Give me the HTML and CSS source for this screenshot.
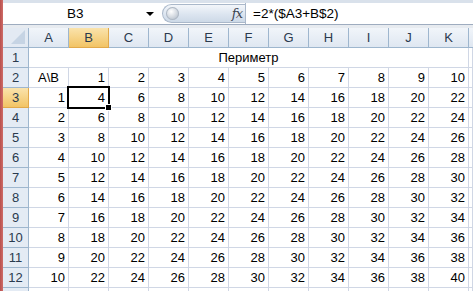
FILE: index.html
```html
<!DOCTYPE html>
<html>
<head>
<meta charset="utf-8">
<link rel="stylesheet" href="styles.css">
</head>
<body>
<div class="app">
  <div class="strip"></div>
  <div class="main">
    <div class="topband"></div>
    <div class="fbar">
      <div class="namebox"><span class="nbtext">B3</span><span class="arrow"></span></div>
      <div class="pill"><span class="knob"></span><span class="fx">fx</span></div>
      <div class="formula">=2*($A3+B$2)</div>
    </div>
    <div class="band"></div>
    <div class="sheet">
      <div class="h corner"><span class="tri"></span></div>
      <div class="h">A</div><div class="h sel">B</div><div class="h">C</div><div class="h">D</div><div class="h">E</div><div class="h">F</div><div class="h">G</div><div class="h">H</div><div class="h">I</div><div class="h">J</div><div class="h">K</div><div class="h last"></div>

      <div class="rh">1</div><div class="c merge">Периметр</div><div class="c"></div>

      <div class="rh">2</div><div class="c ctr">A\B</div><div class="c">1</div><div class="c">2</div><div class="c">3</div><div class="c">4</div><div class="c">5</div><div class="c">6</div><div class="c">7</div><div class="c">8</div><div class="c">9</div><div class="c">10</div><div class="c"></div>

      <div class="rh sel">3</div><div class="c">1</div><div class="c active">4<span class="selbox"><span class="handle"></span></span></div><div class="c">6</div><div class="c">8</div><div class="c">10</div><div class="c">12</div><div class="c">14</div><div class="c">16</div><div class="c">18</div><div class="c">20</div><div class="c">22</div><div class="c"></div>

      <div class="rh">4</div><div class="c">2</div><div class="c">6</div><div class="c">8</div><div class="c">10</div><div class="c">12</div><div class="c">14</div><div class="c">16</div><div class="c">18</div><div class="c">20</div><div class="c">22</div><div class="c">24</div><div class="c"></div>

      <div class="rh">5</div><div class="c">3</div><div class="c">8</div><div class="c">10</div><div class="c">12</div><div class="c">14</div><div class="c">16</div><div class="c">18</div><div class="c">20</div><div class="c">22</div><div class="c">24</div><div class="c">26</div><div class="c"></div>

      <div class="rh">6</div><div class="c">4</div><div class="c">10</div><div class="c">12</div><div class="c">14</div><div class="c">16</div><div class="c">18</div><div class="c">20</div><div class="c">22</div><div class="c">24</div><div class="c">26</div><div class="c">28</div><div class="c"></div>

      <div class="rh">7</div><div class="c">5</div><div class="c">12</div><div class="c">14</div><div class="c">16</div><div class="c">18</div><div class="c">20</div><div class="c">22</div><div class="c">24</div><div class="c">26</div><div class="c">28</div><div class="c">30</div><div class="c"></div>

      <div class="rh">8</div><div class="c">6</div><div class="c">14</div><div class="c">16</div><div class="c">18</div><div class="c">20</div><div class="c">22</div><div class="c">24</div><div class="c">26</div><div class="c">28</div><div class="c">30</div><div class="c">32</div><div class="c"></div>

      <div class="rh">9</div><div class="c">7</div><div class="c">16</div><div class="c">18</div><div class="c">20</div><div class="c">22</div><div class="c">24</div><div class="c">26</div><div class="c">28</div><div class="c">30</div><div class="c">32</div><div class="c">34</div><div class="c"></div>

      <div class="rh">10</div><div class="c">8</div><div class="c">18</div><div class="c">20</div><div class="c">22</div><div class="c">24</div><div class="c">26</div><div class="c">28</div><div class="c">30</div><div class="c">32</div><div class="c">34</div><div class="c">36</div><div class="c"></div>

      <div class="rh">11</div><div class="c">9</div><div class="c">20</div><div class="c">22</div><div class="c">24</div><div class="c">26</div><div class="c">28</div><div class="c">30</div><div class="c">32</div><div class="c">34</div><div class="c">36</div><div class="c">38</div><div class="c"></div>

      <div class="rh">12</div><div class="c">10</div><div class="c">22</div><div class="c">24</div><div class="c">26</div><div class="c">28</div><div class="c">30</div><div class="c">32</div><div class="c">34</div><div class="c">36</div><div class="c">38</div><div class="c">40</div><div class="c"></div>

      <div class="rh"></div><div class="c"></div><div class="c"></div><div class="c"></div><div class="c"></div><div class="c"></div><div class="c"></div><div class="c"></div><div class="c"></div><div class="c"></div><div class="c"></div><div class="c"></div><div class="c"></div>
    </div>
  </div>
</div>
</body>
</html>
```
FILE: styles.css
```css
html, body {
  margin: 0;
  padding: 0;
  background: #ffffff;
}
body {
  width: 473px;
  height: 291px;
  overflow: hidden;
  font-family: "Liberation Sans", Arial, sans-serif;
  font-size: 13px;
  color: #000;
}
.app {
  display: flex;
  width: 473px;
  height: 291px;
  overflow: hidden;
}
.strip {
  width: 3px;
  flex: none;
  background: linear-gradient(90deg, #b8504d, #cf6c68);
}
.main {
  flex: 1;
  min-width: 0;
  display: flex;
  flex-direction: column;
  overflow: hidden;
}
.topband {
  height: 3px;
  flex: none;
  background: #d9e1eb;
}
.fbar {
  height: 21px;
  flex: none;
  display: flex;
  align-items: stretch;
  background: #ffffff;
  border-bottom: 1px solid #9eacbf;
}
.namebox {
  width: 159px;
  flex: none;
  display: flex;
  align-items: center;
  position: relative;
}
.nbtext {
  margin-left: 64px;
  font-size: 13.5px;
}
.arrow {
  margin-left: 62px;
  width: 0;
  height: 0;
  border-left: 4px solid transparent;
  border-right: 4px solid transparent;
  border-top: 4px solid #000;
}
.pill {
  width: 83px;
  flex: none;
  margin: 1px 0 1px 0;
  border-radius: 10px 0 0 10px;
  border: 1px solid #aab8ca;
  border-right: none;
  background: linear-gradient(#f3f6fa, #dce5f0 55%, #cdd9e7);
  display: flex;
  align-items: center;
  justify-content: space-between;
  box-sizing: border-box;
  padding: 0 3px 0 3px;
}
.knob {
  width: 13px;
  height: 13px;
  border-radius: 50%;
  background: radial-gradient(circle at 40% 35%, #ffffff, #c9d0d9 60%, #9aa6b4);
  box-shadow: inset 0 0 0 1px #aeb8c5;
}
.fx {
  font-family: "DejaVu Serif", "Liberation Serif", serif;
  font-style: italic;
  font-size: 13px;
  color: #3b4350;
  letter-spacing: -1px;
}
.formula {
  flex: 1;
  border-left: 1px solid #aab8ca;
  padding-left: 7px;
  display: flex;
  align-items: center;
  font-size: 13.5px;
}
.band {
  height: 3px;
  flex: none;
  background: #e7ebf0;
}
.sheet {
  flex: 1;
  display: grid;
  grid-template-columns: 26px repeat(11, 40px) 1fr;
  grid-auto-rows: 20px;
  overflow: hidden;
}
.h {
  box-sizing: border-box;
  border-right: 1px solid #9eb6ce;
  border-bottom: 1px solid #9eb6ce;
  background: linear-gradient(#f1f5fa, #dfe7f1);
  color: #2a3a4e;
  display: flex;
  align-items: center;
  justify-content: center;
  font-size: 13px;
}
.h.last {
  border-right: none;
}
.h.sel, .rh.sel {
  background: linear-gradient(#fae3ac, #f2c465);
  border-color: #e1a94b;
}
.corner {
  position: relative;
  background: #e3eaf3;
}
.tri {
  position: absolute;
  right: 3px;
  bottom: 3px;
  width: 0;
  height: 0;
  border-left: 14px solid transparent;
  border-bottom: 14px solid #c6d4e4;
}
.rh {
  box-sizing: border-box;
  border-right: 1px solid #9eb6ce;
  border-bottom: 1px solid #9eb6ce;
  background: #e4ebf4;
  color: #2a3a4e;
  display: flex;
  align-items: center;
  justify-content: center;
  font-size: 13px;
}
.c {
  box-sizing: border-box;
  border-right: 1px solid #d0d7e5;
  border-bottom: 1px solid #d0d7e5;
  display: flex;
  align-items: flex-end;
  justify-content: flex-end;
  padding: 0 3px 2px 0;
  line-height: 15px;
}
.c.merge {
  grid-column: span 11;
  justify-content: center;
  padding-right: 0;
}
.c.ctr {
  justify-content: center;
  padding-right: 0;
}
.c.active {
  position: relative;
}
.selbox {
  position: absolute;
  left: -2px;
  top: -2px;
  right: -2px;
  bottom: -2px;
  border: 2px solid #000;
  pointer-events: none;
}
.handle {
  position: absolute;
  right: -4px;
  bottom: -4px;
  width: 5px;
  height: 5px;
  background: #000;
  border: 1px solid #fff;
}
```
